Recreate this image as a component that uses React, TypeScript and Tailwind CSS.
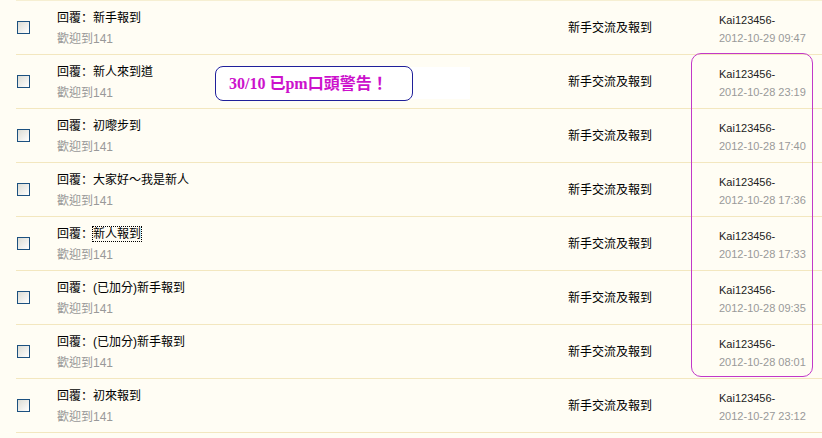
import React from "react";

type Row = {
  title: string;
  author: string;
  date: string;
  focus?: boolean;
};

const rows: Row[] = [
  { title: "新手報到", author: "Kai123456-", date: "2012-10-29 09:47" },
  { title: "新人來到道", author: "Kai123456-", date: "2012-10-28 23:19" },
  { title: "初嚟步到", author: "Kai123456-", date: "2012-10-28 17:40" },
  { title: "大家好～我是新人", author: "Kai123456-", date: "2012-10-28 17:36" },
  { title: "新人報到", author: "Kai123456-", date: "2012-10-28 17:33", focus: true },
  { title: "(已加分)新手報到", author: "Kai123456-", date: "2012-10-28 09:35" },
  { title: "(已加分)新手報到", author: "Kai123456-", date: "2012-10-28 08:01" },
  { title: "初來報到", author: "Kai123456-", date: "2012-10-27 23:12" },
];

function Checkbox() {
  return (
    <div className="w-[13px] h-[13px] border border-[#1c5180] bg-gradient-to-br from-[#dcdcd4] to-[#ffffff]" />
  );
}

export default function App() {
  return (
    <main
      className="relative w-[822px] h-[438px] overflow-hidden bg-[#fffdf4] text-[12px] text-black"
      style={{ fontFamily: '"Liberation Sans", "Noto Sans CJK TC", sans-serif' }}
    >
      <div className="ml-4 border-t border-[#f6efd2]">
        {rows.map((r, i) => (
          <div key={i} className="flex items-center h-[54px] border-b border-[#f3e7bf]">
            <div className="w-[41px] pl-[1px] flex">
              <Checkbox />
            </div>
            <div className="w-[511px] self-start pt-[9px] flex flex-col">
              <div className="leading-[14px]">
                回覆
                <span style={{ fontFamily: '"Noto Sans CJK SC", sans-serif' }}>：</span>
                {r.focus ? (
                  <span className="outline outline-1 outline-dotted outline-black">{r.title}</span>
                ) : (
                  r.title
                )}
              </div>
              <div className="leading-[14px] mt-[7px] text-[#999999]">歡迎到141</div>
            </div>
            <div className="w-[151px] leading-[14px]">新手交流及報到</div>
            <div className="flex-1 self-start pt-[12px] flex flex-col">
              <div className="text-[11px] leading-[14px] text-[#222222]">{r.author}</div>
              <div className="text-[11px] leading-[14px] mt-[4px] text-[#999999]">{r.date}</div>
            </div>
          </div>
        ))}
      </div>

      {/* pasted note */}
      <div className="absolute left-[215px] top-[67px] w-[255px] h-[32px] bg-white" />
      <div
        className="absolute left-[215px] top-[66px] w-[198px] h-[35px] border border-[#20209a] rounded-[8px] bg-white flex items-center pl-[13px] text-[16px] font-bold text-[#cc11cc]"
        style={{ fontFamily: '"Liberation Serif", "Noto Sans CJK TC", serif' }}
      >
        30/10 已pm口頭警告！
      </div>

      {/* highlight ring */}
      <div className="absolute left-[691px] top-[53px] w-[122px] h-[324px] border border-[#c238c8] rounded-[10px]" />
    </main>
  );
}
